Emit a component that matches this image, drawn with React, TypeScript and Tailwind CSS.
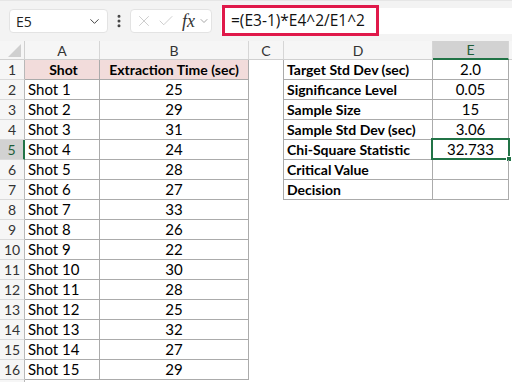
import { ChevronDown, X, Check, EllipsisVertical } from "lucide-react";

const shots = [25, 29, 31, 24, 28, 27, 33, 26, 22, 30, 28, 25, 32, 27, 29];

const stats = [
  { label: "Target Std Dev (sec)", value: "2.0" },
  { label: "Significance Level", value: "0.05" },
  { label: "Sample Size", value: "15" },
  { label: "Sample Std Dev (sec)", value: "3.06" },
  { label: "Chi-Square Statistic", value: "32.733" },
  { label: "Critical Value", value: "" },
  { label: "Decision", value: "" },
];

const Toolbar = () => (
  <div className="h-[41px] bg-[#f3f3f3] border-t border-[#e6e6e6] flex items-center relative">
    <div className="ml-[9px] w-[99px] h-[24px] bg-white rounded-[4px] border border-[#e3e3e3] flex items-center justify-between pl-[6px] pr-[5px] text-[14px] text-[#222] font-['Open_Sans',sans-serif]">
      <span>E5</span>
      <ChevronDown className="w-[15px] h-[15px] text-[#444]" strokeWidth={1.6} />
    </div>
    <EllipsisVertical className="ml-[3px] w-[16px] h-[16px] text-[#444]" strokeWidth={2.5} />
    <div className="ml-[3px] w-[82px] h-[24px] bg-white rounded-[4px] border border-[#e3e3e3] flex items-center pl-[4px]">
      <X className="w-[18px] h-[18px] text-[#c4c4c4]" strokeWidth={1.1} />
      <Check className="ml-[4px] w-[18px] h-[18px] text-[#c4c4c4]" strokeWidth={1.1} />
      <span className="ml-[7px] text-[18px] leading-none italic text-[#333] font-['Liberation_Serif',serif]">fx</span>
      <ChevronDown className="ml-[3px] w-[12px] h-[12px] text-[#888]" strokeWidth={1.5} />
    </div>
    <div className="ml-[9px] flex-1 h-[26px] bg-white self-center" />
    <div className="absolute left-[222px] top-[4px] w-[157px] h-[31px] border-[3px] border-[#e0194a] bg-white flex items-center pl-[6px] text-[15.5px] text-[#111] font-['Open_Sans',sans-serif]">
      =(E3-1)*E4^2/E1^2
    </div>
  </div>
);

const HeaderRow = () => {
  const cols = [
    { l: "A", w: "w-[75px]" },
    { l: "B", w: "w-[149px]" },
    { l: "C", w: "w-[35px]" },
    { l: "D", w: "w-[149px]" },
  ];
  return (
    <div className="flex h-[19px] bg-[#f6f6f6] text-[14px] text-[#333] border-b border-[#d0d0d0]">
      <div className="w-[25px] border-r border-[#d0d0d0] relative">
        <div className="absolute right-[3px] bottom-[2px] w-0 h-0 border-l-[13px] border-l-transparent border-b-[13px] border-b-[#cfcfcf]" />
      </div>
      {cols.map((c) => (
        <div key={c.l} className={`${c.w} border-r border-[#d6d6d6] flex items-center justify-center`}>
          {c.l}
        </div>
      ))}
      <div className="w-[76px] bg-[#d2d2d2] border-r border-[#d6d6d6] border-b-2 border-b-[#217346] -mb-px flex items-center justify-center text-[#1e5e3a]">
        E
      </div>
    </div>
  );
};

export default function App() {
  const rows = Array.from({ length: 17 }, (_, i) => i + 1);
  const line = "border-[#ababab]";
  return (
    <div className="w-[512px] h-[382px] overflow-hidden bg-white font-['Lato',sans-serif] text-[15px] text-black">
      <Toolbar />
      <HeaderRow />
      {rows.map((r) => {
        const shotIdx = r - 2;
        const stat = r <= 7 ? stats[r - 1] : null;
        const selected = r === 5;
        const inTableA = r <= 16;
        return (
          <div key={r} className="flex h-[20px] leading-[19px]">
            <div
              className={`w-[25px] flex items-center justify-center text-[14px] border-b border-[#dadada] ${
                selected
                  ? "bg-[#d2d2d2] text-[#1e5e3a] border-r-2 border-r-[#217346]"
                  : "bg-[#f6f6f6] text-[#333] border-r border-r-[#b8b8b8]"
              }`}
            >
              {r <= 16 ? r : ""}
            </div>
            {inTableA ? (
              <>
                <div
                  className={`w-[75px] border-r border-b ${line} pl-[3px] ${
                    r === 1 ? "bg-[#f2dcdb] font-bold text-[14px] text-center pl-0" : ""
                  }`}
                >
                  {r === 1 ? "Shot" : `Shot ${shotIdx + 1}`}
                </div>
                <div
                  className={`w-[149px] border-r border-b ${line} text-center ${
                    r === 1 ? "bg-[#f2dcdb] font-bold text-[14px]" : ""
                  }`}
                >
                  {r === 1 ? "Extraction Time (sec)" : shots[shotIdx]}
                </div>
              </>
            ) : (
              <div className="w-[224px]" />
            )}
            <div className={`w-[35px] ${stat ? `border-r ${line}` : ""}`} />
            {stat ? (
              <>
                <div className={`w-[149px] border-r border-b ${line} pl-[3px] font-bold text-[14px]`}>
                  {stat.label}
                </div>
                <div className={`w-[76px] border-r border-b ${line} text-center relative`}>
                  {stat.value}
                  {selected && (
                    <div className="absolute -left-[2px] -top-[2px] -right-[2px] -bottom-px border-2 border-[#217346]">
                      <div className="absolute -right-[4px] -bottom-[4px] w-[6px] h-[6px] bg-[#217346] border border-white" />
                    </div>
                  )}
                </div>
              </>
            ) : null}
          </div>
        );
      })}
    </div>
  );
}
